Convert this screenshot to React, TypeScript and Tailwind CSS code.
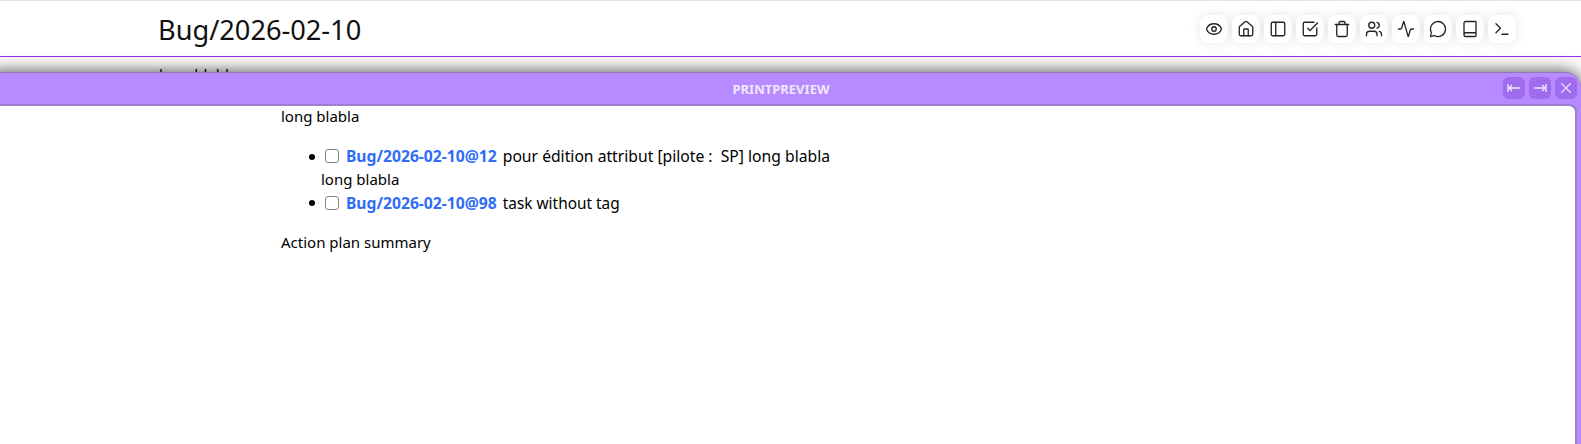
import { Eye, House, PanelLeft, SquareCheckBig, Trash, Users, Activity, MessageCircle, Book, Terminal, X } from "lucide-react";

const icons = [Eye, House, PanelLeft, SquareCheckBig, Trash, Users, Activity, MessageCircle, Book, Terminal];

function Arrow({ flip }: { flip?: boolean }) {
  return (
    <svg width="14" height="10" viewBox="0 0 14 10" fill="none" stroke="currentColor" strokeWidth="1.4" className={flip ? "scale-x-[-1]" : ""}>
      <path d="M1 1v8M2 5h11M2 5l3-3M2 5l3 3" />
    </svg>
  );
}

const bullet = "relative before:absolute before:-left-[12px] before:top-[9px] before:h-[6px] before:w-[6px] before:rounded-full before:bg-black before:content-['']";
const box = "mr-[3px] ml-[4px] h-[14px] w-[14px] appearance-none rounded-[3px] border border-[#858585] bg-white align-[-1px]";
const link = "text-[15.7px] font-bold text-[#2f6df6]";

export default function App() {
  return (
    <div className="relative h-[444px] w-[1581px] overflow-hidden bg-white font-['Noto_Sans',sans-serif] text-black">
      <header className="flex h-[57px] items-center justify-between border-t border-b border-t-[#e2e2e2] border-b-[#9333ea] bg-white pl-[158px] pr-[65px]">
        <h1 className="mt-[2px] text-[27.2px] leading-none text-[#111]">Bug/2026-02-10</h1>
        <div className="flex gap-1">
          {icons.map((Icon, i) => (
            <div key={i} className="flex h-7 w-7 items-center justify-center rounded-lg bg-white text-[#222] shadow-[0_0_12px_rgba(0,0,0,0.1)]">
              <Icon size={18} strokeWidth={1.75} />
            </div>
          ))}
        </div>
      </header>
      <div className="pl-[159px] pt-[6px] text-[15px]">long blabla</div>

      <section className="absolute -left-[10px] right-0 top-[72px] bottom-0 flex flex-col rounded-tr-2xl border-t border-[#8f78b5] bg-[#b78aff] shadow-[0_0_18px_rgba(0,0,0,0.75)]">
        <div className="relative flex h-[31px] items-center justify-center pt-[2px] pr-[9px] text-[13px] font-bold text-[#f0e6ff]">
          PRINTPREVIEW
          <div className="absolute right-[4px] top-[4px] flex gap-[4px]">
            <button className="flex h-[22px] w-[22px] items-center justify-center rounded-md bg-[#a06bee] text-[#efe5ff]"><Arrow /></button>
            <button className="flex h-[22px] w-[22px] items-center justify-center rounded-md bg-[#a06bee] text-[#efe5ff]"><Arrow flip /></button>
            <button className="flex h-[22px] w-[22px] items-center justify-center rounded-md bg-[#a06bee] text-[#efe5ff]"><X size={18} strokeWidth={1.5} /></button>
          </div>
        </div>
        <div className="mr-[4px] flex-1 rounded-tr-lg border-t-2 border-r-2 border-[#9d7fcf] bg-white pl-[291px] text-[15px] leading-[23px]">
          <p className="leading-[21px]">long blabla</p>
          <ul className="mt-[18px] mb-[17px] pl-[40px] leading-[23px]">
            <li className={bullet}>
              <input type="checkbox" className={box} />{" "}
              <a className={link}>Bug/2026-02-10@12</a> <span className="ml-[2px] text-[15.7px]">pour édition attribut [pilote :&nbsp; SP] long blabla</span>
              <br />long blabla
            </li>
            <li className={`${bullet} pt-px`}>
              <input type="checkbox" className={box} />{" "}
              <a className={link}>Bug/2026-02-10@98</a> <span className="ml-[2px] text-[15.4px]">task without tag</span>
            </li>
          </ul>
          <p className="-mt-px">Action plan summary</p>
        </div>
      </section>
    </div>
  );
}
